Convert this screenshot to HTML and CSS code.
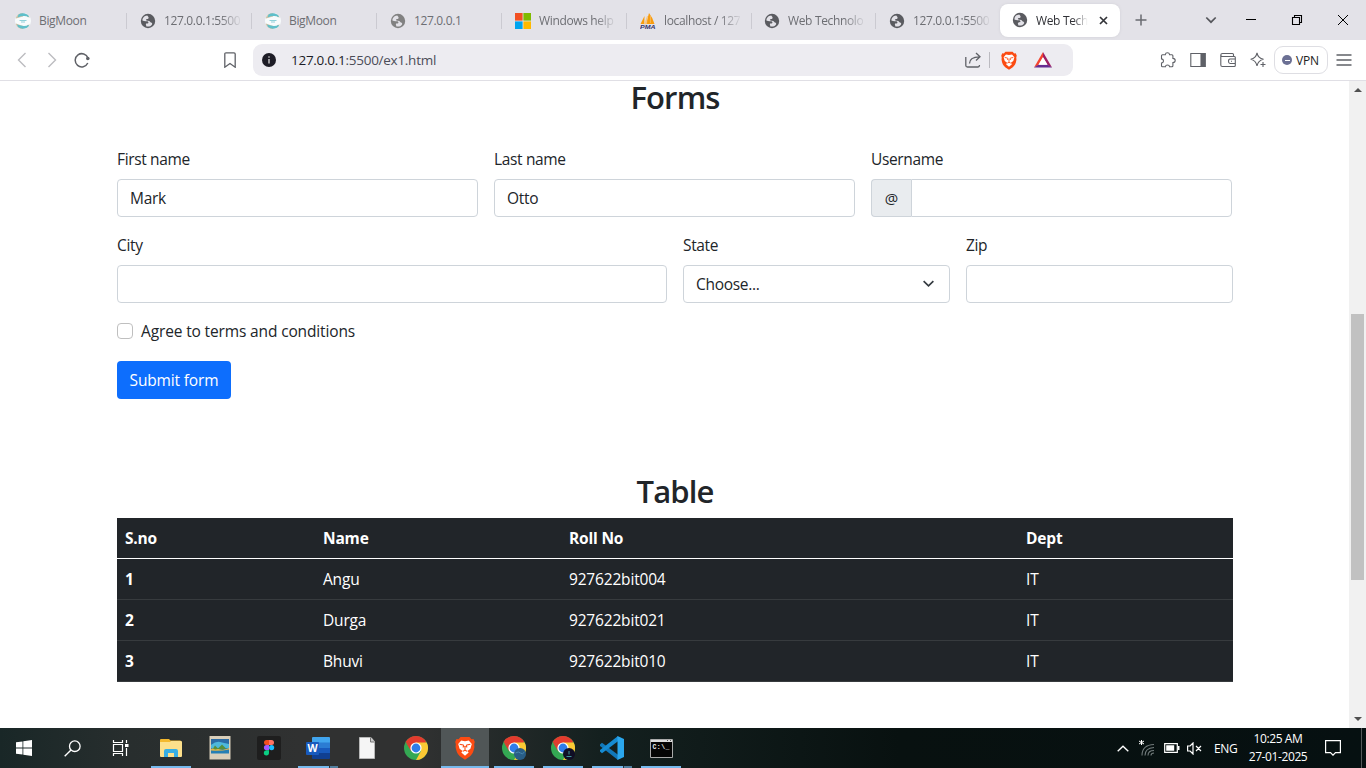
FILE: index.html
```html
<!DOCTYPE html>
<html lang="en">
<head>
<meta charset="utf-8">
<title>Web Technology</title>
<link rel="stylesheet" href="styles.css">
</head>
<body>
<svg class="defs" width="0" height="0">
  <defs>
    <symbol id="globe" viewBox="0 0 16 16"><circle cx="8" cy="8" r="7.2" fill="currentColor"/><path d="M7.200 2.400C4.200 2.600 2.300 5 2.400 7.600c1.200.5 2.600.9 4 .7.900-.2 1.800.1 2 .9.200.9-.4 1.200-1.700 1.200-.7 0-1 .5-.8 1.200l.5 1.900c2.300.4 4.500-.4 5.600-2.100.6-1-.1-1.600-1-2-.9-.4-.9-1.300-2-1.500-1.200-.2-2.300-.1-2.900-.6-.5-.6.1-1.200 1-1.300.9-.1 1.500-.4 1.500-1.300 0-.7-.4-1.400-1.400-2.300z" fill="#e3e2e8"/></symbol>
    <symbol id="moon" viewBox="0 0 16 16"><circle cx="8" cy="8" r="8" fill="#f8fbfc"/><path d="M.6 5A8 8 0 0 1 8 0v3.500L1 5.500zM.6 11A8 8 0 0 0 8 16v-3L1 10.500zM12 1.200l3 3.300-3-.5zM12 14.800l3-3.300-3 .5z" fill="#d3c5aa"/><path d="M3.500 1.500A8 8 0 0 1 14 3L13.500 4Q9 2 2.500 4.500zM3 14a8 8 0 0 0 11-1L13.500 12Q9 14 2 11.500z" fill="#5fbfca"/><path d="M4.500 7.500h7M6 9h4" stroke="#8fd0d9"/></symbol>
    <symbol id="lion" viewBox="0 0 20 24"><path d="M5.500 1h9l2 2.200 2-.3L19.800 6l-.6 2 .2 3c-.8 5-2.200 7.500-5 9.800L10 23.700l-4.400-2.900C2.800 18.500 1.400 16 .6 11l.2-3L.2 6l1.300-3.100 2 .3z" fill="#fb4b12"/><path d="M6.200 4.500 10 5.200l3.800-.7 3 3.500-1.400 4.700-3 2.200 1.300 1.700L10 19.800l-3.700-3.200 1.300-1.700-3-2.200L3.200 8z" fill="#fff"/><path d="m4.600 8.200 3.600.7.600 1.200-1 1.200M15.400 8.200l-3.600.7-.6 1.200 1 1.200M10 10v4.200m-2.200 1.100L10 14.300l2.200 1" stroke="#fb4b12" fill="none" stroke-width="1.100"/></symbol>
    <symbol id="chrome" viewBox="0 0 24 24"><circle cx="12" cy="12" r="12" fill="#34a853"/><path d="M12 12 1.600 6A12 12 0 0 1 22.400 6z" fill="#e33b2e"/><path d="M12 6.500h10.700A12 12 0 0 1 12 24l5-9z" fill="#fcc934"/><path d="M1.600 6 7 15l5-3z" fill="#e33b2e"/><circle cx="12" cy="12" r="5.600" fill="#fff"/><circle cx="12" cy="12" r="4.400" fill="#2f7de9"/></symbol>
  </defs>
</svg>

<header class="tabs">
  <div class="tab first"><svg class="fav"><use href="#moon"/></svg><span>BigMoon</span></div>
  <div class="tab"><svg class="fav"><use href="#globe"/></svg><span class="fade">127.0.0.1:5500</span></div>
  <div class="tab"><svg class="fav"><use href="#moon"/></svg><span>BigMoon</span></div>
  <div class="tab"><svg class="fav dim"><use href="#globe"/></svg><span>127.0.0.1</span></div>
  <div class="tab"><svg class="fav" viewBox="0 0 16 16"><path fill="#f25022" d="M0 0h7.600v7.600H0z"/><path fill="#7fba00" d="M8.400 0H16v7.600H8.400z"/><path fill="#00a4ef" d="M0 8.400h7.600V16H0z"/><path fill="#ffb900" d="M8.400 8.400H16V16H8.400z"/></svg><span class="fade">Windows help</span></div>
  <div class="tab"><svg class="fav" viewBox="0 0 16 16"><path d="M4.500 3 .5 11h3.800zM9 0 6 11h8.500Q13 5 9 0z" fill="#f89c0e"/><path d="M7.500 3 4.500 11h2zM10.500 3v7" fill="#f6c889" stroke="#f9c277" stroke-width=".6"/><text x="0" y="15.800" font-size="6.200" font-weight="700" font-style="italic" font-family="Liberation Sans, sans-serif" fill="#34336b" textLength="15.500" lengthAdjust="spacingAndGlyphs">PMA</text></svg><span class="fade">localhost / 127</span></div>
  <div class="tab"><svg class="fav"><use href="#globe"/></svg><span class="fade">Web Technolo</span></div>
  <div class="tab last"><svg class="fav"><use href="#globe"/></svg><span class="fade">127.0.0.1:5500</span></div>
  <div class="tab active"><svg class="fav"><use href="#globe"/></svg><span class="fade">Web Tech</span><svg class="close" viewBox="0 0 9 9"><path d="m1 1 7 7m0-7L1 8" stroke="#333539" stroke-width="1.700"/></svg></div>
  <svg class="plus" viewBox="0 0 12 12"><path d="M6 .5v11M.5 6h11" stroke="#6a6b70" stroke-width="1.500"/></svg>
  <div class="window-controls">
    <svg width="12" height="12" viewBox="0 0 12 12"><path d="m1.300 3.500 4.700 4.700 4.700-4.700" fill="none" stroke="#55565b" stroke-width="1.700"/></svg>
    <svg width="12" height="12" viewBox="0 0 12 12"><path d="M1 5.500h10" stroke="#000"/></svg>
    <svg width="12" height="12" viewBox="0 0 12 12"><path d="M1.500 3.500h7v7h-7zM3.500 3.500v-2h7v7h-2" fill="none" stroke="#000" stroke-width="1.100"/></svg>
    <svg width="12" height="12" viewBox="0 0 12 12"><path d="m1 1 10 10M11 1 1 11" stroke="#000"/></svg>
  </div>
</header>

<nav class="toolbar">
  <div class="history">
    <svg viewBox="0 0 16 16"><path d="M11.500 1 4.500 8l7 7" stroke="#bcbcc0" stroke-width="1.400"/></svg>
    <svg viewBox="0 0 16 16"><path d="m4.500 1 7 7-7 7" stroke="#bcbcc0" stroke-width="1.400"/></svg>
    <svg viewBox="0 0 16 16"><path d="M14 6A6.600 6.600 0 1 0 13.800 11" stroke="#5f6167" stroke-width="1.500"/><circle cx="13.800" cy="6.500" r="1.800" fill="#5f6167"/></svg>
  </div>
  <svg class="bookmark" viewBox="0 0 12 16"><path d="M2 .8h8Q11.200.8 11.200 2v13.200L6 11.500.8 15.200V2Q.8.8 2 .8z"/></svg>
  <div class="address">
    <svg class="info" viewBox="0 0 14 14"><circle cx="7" cy="7" r="7" fill="#1d1c26"/><path d="M7 6v4.500" stroke="#ddd" stroke-width="1.300"/><circle cx="7" cy="4" r=".8" fill="#ddd"/></svg>
    <span class="url"><b>127.0.0.1</b>:5500/ex1.html</span>
    <svg class="share" viewBox="0 0 16 16"><path d="M.8 5v8.500Q.8 15 2.500 15H13q1.500 0 1.500-2M4.500 11.500Q4.500 5 14.500 4.800M11 1l4 3.800-4 3.700"/></svg>
    <i class="divider"></i>
    <svg class="brave"><use href="#lion"/></svg>
    <svg class="bat" viewBox="0 0 18 16"><path d="M9 0 0 15.500l4.500-2.300L9 5.500z" fill="#f4442e"/><path d="m9 0 9 15.500-4.500-2.300L9 5.500z" fill="#9e1f63"/><path d="M0 15.500h18l-4.500-2.700h-9z" fill="#662d91"/><path d="m9 5-4.600 7.800h9.200z" fill="#fff"/></svg>
  </div>
  <div class="tools">
    <svg viewBox="0 0 16 16"><path d="M2.500 2.700h2.800Q5.500.8 7.400.8T9.600 2.700h2.300q1 0 1 1v2.700q2.300.1 2.300 2.100t-2.300 2.100v3.200q0 1-1 1H9.600Q9.400 13 7.500 13t-2.100 1.800H2.500q-1 0-1-1v-2.700q2-.2 2-2.100t-2-2.100V3.700q0-1 1-1z"/></svg>
    <svg viewBox="0 0 16 16"><path d="M.8 1.500h14.400v13H.8z"/><path d="M11 1.500h4v13h-4z" fill="#5f6167"/></svg>
    <svg viewBox="0 0 16 16"><path d="M13.500 4.500V2.500q0-1-1-1h-10Q.8 1.500.8 3T2.500 4.500h12q.8 0 .8 1v8q0 1-1 1H2.300q-1.500 0-1.500-1.500V3M15 7H10q-1.500 0-1.500 2.200T10 11.500h5M11 9.200h1"/></svg>
    <svg viewBox="0 0 16 16"><path d="M7 .8Q8 6 13.500 7.300 8 8.500 7 14 6 8.500.7 7.300 6 6 7 .8zM13 10v5m-2.500-2.500h5"/></svg>
  </div>
  <div class="vpn"><i></i>VPN</div>
  <svg class="menu" viewBox="0 0 16 12"><path d="M.5 1h15M.5 6h15M.5 11h15"/></svg>
</nav>

<div class="viewport">
  <main class="page">
    <h2>Forms</h2>
    <form class="form">
      <div class="row names">
        <label><span>First name</span><div class="control">Mark</div></label>
        <label><span>Last name</span><div class="control">Otto</div></label>
        <label><span>Username</span><div class="group"><div class="addon">@</div><div class="control"></div></div></label>
      </div>
      <div class="row places">
        <label><span>City</span><div class="control"></div></label>
        <label><span>State</span><div class="control select">Choose...<svg viewBox="0 0 16 16"><path d="m2 5 6 6 6-6"/></svg></div></label>
        <label><span>Zip</span><div class="control"></div></label>
      </div>
      <div class="check"><i></i><span>Agree to terms and conditions</span></div>
      <button class="submit" type="button">Submit form</button>
    </form>
    <h2 class="table-title">Table</h2>
    <table>
      <colgroup><col class="c1"><col class="c2"><col class="c3"><col></colgroup>
      <thead><tr><th>S.no</th><th>Name</th><th>Roll No</th><th>Dept</th></tr></thead>
      <tbody>
        <tr><th>1</th><td>Angu</td><td>927622bit004</td><td>IT</td></tr>
        <tr><th>2</th><td>Durga</td><td>927622bit021</td><td>IT</td></tr>
        <tr><th>3</th><td>Bhuvi</td><td>927622bit010</td><td>IT</td></tr>
      </tbody>
    </table>
  </main>
  <div class="scrollbar">
    <svg viewBox="0 0 8 4"><path d="M0 4h8L4 0z"/></svg>
    <div class="thumb"></div>
    <svg viewBox="0 0 8 4"><path d="M0 0h8L4 4z"/></svg>
  </div>
</div>

<footer class="taskbar">
  <div class="system">
    <div class="slot"><svg width="16" height="16" viewBox="0 0 16 16"><path d="M0 2.300 6.500 1.400v6.200H0zM7.300 1.200 16 0v7.600H7.300zM0 8.400h6.500v6.200L0 13.700zM7.300 8.400H16V16l-8.700-1.200z" fill="#fff"/></svg></div>
    <div class="slot"><svg width="17" height="17" viewBox="0 0 17 17"><circle cx="10.800" cy="6.200" r="5.300" fill="none" stroke="#fff" stroke-width="1.300"/><path d="m7 10-6.300 6.300" stroke="#fff" stroke-width="1.400"/></svg></div>
    <div class="slot"><svg width="17" height="16" viewBox="0 0 17 16"><path d="M1.500 0v2.500h9V0M1.500 16v-2.500h9V16M1.500 4.500h9v7h-9zM14.500 0v3M14.500 8v8" fill="none" stroke="#fff" stroke-width="1.200"/><path d="M13 4h3.500v3H13z" fill="#fff"/></svg></div>
  </div>
  <div class="apps">
    <div class="slot run"><svg width="22" height="18" viewBox="0 0 22 18"><path d="M0 1q0-1 1-1h8l1.500 1.500H20q1 0 1 1V17H0z" fill="#f4b92e"/><path d="M0 3h10l1-1h10q1 0 1 1v14q0 1-1 1H1q-1 0-1-1z" fill="#fde08b"/><path d="M4 18v-6q0-2 2-2h10q2 0 2 2v6h-4v-4H8v4z" fill="#37aee3"/></svg></div>
    <div class="slot"><svg width="22" height="24" viewBox="0 0 22 24"><path d="M.5 0h21v23.500H.5z" fill="#d9cfba"/><path d="M2 3h18v14.500H2z" fill="#257fb4"/><path d="M2 3h18v5H2z" fill="#2b6ca6"/><path d="M2 9q5-4 9-3t9 2v4H2z" fill="#4db8dc"/><path d="M2 13q4-2 8 0t10-1v1.500q-9 2-18 1z" fill="#e0b648"/><path d="m4 12.500 2-3 3 3 4-4 4 4-3 1-5-.5-3 .5z" fill="#568f3d"/></svg></div>
    <div class="slot"><svg width="24" height="24" viewBox="0 0 24 24"><rect width="24" height="24" rx="2" fill="#1e1e1e"/><path d="M12 4H9.500a2.500 2.500 0 0 0 0 5H12z" fill="#f24e1e"/><path d="M12 4h2.500a2.500 2.500 0 0 1 0 5H12z" fill="#ff7262"/><path d="M12 9H9.500a2.600 2.600 0 0 0 0 5.200H12z" fill="#a259ff"/><circle cx="14.600" cy="11.600" r="2.600" fill="#1abcfe"/><path d="M12 14.200H9.500a2.600 2.600 0 1 0 2.500 2.600z" fill="#0acf83"/></svg></div>
    <div class="slot run multi"><svg width="24" height="22" viewBox="0 0 24 22"><path d="M6 1q0-1 1-1h16q1 0 1 1v5H6z" fill="#41a5ee"/><path d="M6 5.500h18V11H6z" fill="#2b7cd3"/><path d="M6 11h18v5.500H6z" fill="#185abd"/><path d="M6 16h18v5q0 1-1 1H7q-1 0-1-1z" fill="#103f91"/><rect y="5" width="13" height="13" rx="1" fill="#185abd"/><text x="6.500" y="15" text-anchor="middle" font-family="Open Sans, sans-serif" font-size="10.500" font-weight="700" fill="#fff">W</text></svg></div>
    <div class="slot"><svg width="16" height="22" viewBox="0 0 16 22"><path d="M.5.500h11.500l3.500 4v17H.5z" fill="#f5f5f5" stroke="#b8b8b8"/><path d="M11.500.5v4.500h4" fill="#ccc" stroke="#777"/></svg></div>
    <div class="slot"><svg width="24" height="24"><use href="#chrome"/></svg></div>
    <div class="slot current"><svg width="20" height="24"><use href="#lion"/></svg></div>
    <div class="slot run"><svg width="24" height="24"><use href="#chrome"/><circle cx="18" cy="18" r="6" fill="#285d86"/><path d="M13.500 17q3-2 5 0t4-1" stroke="#4787b0" fill="none"/></svg></div>
    <div class="slot run"><svg width="24" height="24"><use href="#chrome"/><circle cx="18" cy="18" r="6" fill="#100e25"/><path d="M18 15v3.500m-2.500 2h5" stroke="#3f9597" fill="none"/></svg></div>
    <div class="slot run multi"><svg width="24" height="24" viewBox="0 0 24 24"><path d="m0 8.500 2-1.800 16 12V24L0 10z" fill="#1278ba"/><path d="m0 15.500 2 1.800 16-12V0L0 14z" fill="#168bd2"/><path d="m17.500 0 6.500 3v18l-6.500 3z" fill="#2ba7ed"/></svg></div>
    <div class="slot run"><svg width="23" height="19" viewBox="0 0 23 19"><path d="M.5.500h22v18H.5z" fill="#050505" stroke="#aaa"/><path d="M1 1h21v2H1z" fill="#ddd"/><path d="M17 1h1v1h-1zm3 0h1v1h-1z" fill="#555"/><text x="2.500" y="9.500" font-family="Liberation Mono, monospace" font-size="6.500" font-weight="700" fill="#eee" textLength="17">C:\_</text></svg></div>
  </div>
  <div class="tray">
    <svg class="up" viewBox="0 0 12 7"><path d="m.7 6.300 5.300-5 5.300 5" fill="none" stroke="#fff" stroke-width="1.400"/></svg>
    <svg class="wifi" viewBox="0 0 16 16"><path d="M3 15.500Q3 5 15 4.500M6 15.500Q6 8 15 7.500M9 15.500q0-5 6-5M12 15.500q0-2.500 3-2.500" fill="none" stroke="#727b7c" stroke-width="1.100"/><path d="M2.500 0v5M0 1l5 3M5 1 0 4" stroke="#fff"/></svg>
    <svg class="battery" viewBox="0 0 16 10"><path d="M.7.700h12.600v8.600H.7z" fill="none" stroke="#fff" stroke-width="1.200"/><path d="M2.200 2.300h8v5.400h-8zM14 3h1.500v4H14z" fill="#fff"/></svg>
    <svg class="sound" viewBox="0 0 15 13"><path d="M.6 4h2.500L6 1v11L3.100 9H.6zM9 4l5 5m0-5L9 9" fill="none" stroke="#fff" stroke-width="1.200"/></svg>
    <span class="lang">ENG</span>
    <div class="clock"><span>10:25 AM</span><span class="date">27-01-2025</span></div>
    <svg class="note" viewBox="0 0 16 16"><path d="M.6.600h14.800v12H10.500L8 15.200l-2.500-2.600H.6z" fill="none" stroke="#fff" stroke-width="1.200"/></svg>
    <i class="peek"></i>
  </div>
</footer>
</body>
</html>
```
FILE: styles.css
```css
* { box-sizing: border-box; }
body { margin: 0; width: 1366px; height: 768px; overflow: hidden; display: flex; flex-direction: column; background: #fff; color: #212529; font-family: "Open Sans", "Noto Sans", sans-serif; font-size: 15.5px; }
svg { display: block; flex: none; }
.defs { display: none; }

.tabs { height: 40px; flex: none; display: flex; align-items: center; background: #e3e2e8; font-size: 12px; color: #6d6e73; }
.tab { width: 125px; height: 16px; padding-left: 13px; display: flex; align-items: center; gap: 8px; border-right: 1px solid #cbcad1; white-space: nowrap; flex: none; margin-top: 1px; }
.tab span { letter-spacing: -.35px; width: 80px; }
.fade { -webkit-mask-image: linear-gradient(90deg, #000 70%, transparent 98%); mask-image: linear-gradient(90deg, #000 70%, transparent 98%); }
.tab.first { width: 127px; padding-left: 15px; }
.tab:nth-child(7) { width: 124px; padding-left: 12px; }
.tab.last { border: 0; width: 124px; }
.fav { width: 16px; height: 16px; color: #5a5b60; }
.dim { color: #818181; }
.tab.active { width: 120px; height: 33px; margin: 0; border: 0; border-radius: 8px; background: #fff; color: #303136; padding-left: 12px; box-shadow: 0 0 3px #d0cfd6; }
.tab.active span { width: 53px; }
.close { width: 9px; height: 9px; margin-left: 2px; }
.plus { width: 12px; height: 12px; margin-left: 15px; }
.window-controls { display: flex; margin-left: auto; gap: 34px; padding-right: 17px; }
.window-controls svg:first-child { margin-right: -6px; }

.toolbar { height: 41px; flex: none; display: flex; align-items: center; border-bottom: 1px solid #e0dfe5; background: #fff; }
.toolbar svg { fill: none; stroke-width: 1.3px; }
.history { display: flex; gap: 14px; padding-left: 14px; }
.history svg { width: 16px; height: 16px; }
.bookmark { width: 12px; height: 16px; margin-left: 134px; stroke: #5f6167; }
.address { width: 820px; height: 32px; margin-left: 17px; border-radius: 9px; background: #edecf1; display: flex; align-items: center; padding-left: 9px; }
.info { width: 14px; height: 14px; }
.url { margin-left: 15px; font-size: 13.5px; letter-spacing: -.27px; color: #4c4d58; }
.url b { font-weight: 400; color: #1c1c27; }
.share { width: 16px; height: 16px; margin-left: auto; stroke: #5f6167; }
.divider { width: 1px; height: 16px; margin: 0 10px 0 8px; background: #bbbac0; }
.brave { width: 18px; height: 19px; }
.bat { width: 18px; height: 16px; margin: 0 21px 0 16px; }
.tools { display: flex; gap: 14px; margin-left: 87px; }
.tools svg { width: 16px; height: 16px; stroke: #5f6167; stroke-width: 1.1px; }
.vpn { width: 54px; height: 28px; margin-left: 8px; border: 1px solid #dedee3; border-radius: 9px; display: flex; align-items: center; gap: 4px; padding-left: 7px; font-size: 12px; color: #222; letter-spacing: -.2px; }
.vpn i { width: 10px; height: 10px; border-radius: 50%; background: #6b7094; display: flex; align-items: center; justify-content: center; }
.vpn i::before { content: ""; width: 5px; height: 1px; background: #fff; }
.menu { width: 16px; height: 12px; margin-left: 8px; stroke: #5f6167; }

.viewport { height: 647px; flex: none; display: flex; overflow: hidden; }
.page { width: 1349px; padding: 0 116px 0 117px; }
h2 { margin: 0; height: 38px; line-height: 33px; font-size: 31px; font-weight: 600; text-align: center; letter-spacing: -.85px; }
.form { margin-top: 28px; }
.row { display: grid; gap: 16px; margin-bottom: 16px; }
.names { grid-template-columns: 361px 361px 361px; }
.places { grid-template-columns: 550px 267px 267px; }
.row label { display: block; }
.row label > span { display: block; height: 32px; line-height: 25px; letter-spacing: -.35px; }
.control { height: 38px; border: 1px solid #ced4da; border-radius: 4px; padding: 0 12px; line-height: 37px; letter-spacing: -.3px; background: #fff; }
.group { display: flex; }
.addon { width: 40px; height: 38px; border: 1px solid #ced4da; border-right: 0; border-radius: 4px 0 0 4px; background: #e9ecef; text-align: center; line-height: 36px; font-size: 15px; }
.group .control { flex: 1; border-radius: 0 4px 4px 0; }
.select { display: flex; align-items: center; justify-content: space-between; }
.select svg { width: 13px; height: 13px; margin-right: 2px; margin-bottom: 2px; fill: none; stroke: #343a40; stroke-width: 2px; }
.check { height: 26px; display: flex; align-items: flex-start; gap: 8px; line-height: 25px; letter-spacing: -.14px; }
.check i { width: 16px; height: 16px; margin-top: 4px; border: 1px solid #bfbfbf; border-radius: 4px; }
.submit { display: block; width: 114px; height: 38px; margin-top: 16px; padding: 0; border: 0; border-radius: 4px; background: #0d6efd; color: #fff; font: inherit; letter-spacing: -.15px; }
.table-title { margin-top: 75px; line-height: 35px; }
table { width: 1116px; margin-top: 6px; border-collapse: separate; border-spacing: 0; table-layout: fixed; background: #212529; color: #fff; letter-spacing: -.18px; }
.c1 { width: 198px; }
.c2 { width: 246px; }
.c3 { width: 457px; }
th, td { height: 41px; padding: 0 8px; border-bottom: 1px solid #373b3e; text-align: left; line-height: 24px; }
thead th { border-bottom-color: #fff; }

.scrollbar { width: 17px; background: #f1f1f1; display: flex; flex-direction: column; align-items: center; padding: 7px 0 7px; }
.scrollbar svg { width: 8px; height: 4px; fill: #505050; }
.thumb { width: 13px; height: 266px; margin: 222px 0 auto; background: #c1c1c1; }

.taskbar { height: 40px; flex: none; display: flex; background: linear-gradient(90deg, #192727 0, #282e2e 130px, #303131 300px, #303131 420px, #14201f 600px, #081110 900px, #061011 100%); color: #fff; }
.system, .apps { display: flex; }
.system { margin-right: 3px; }
.apps { gap: 1px; }
.slot { width: 48px; height: 40px; display: flex; align-items: center; justify-content: center; }
.run { background: linear-gradient(#76b9ed, #76b9ed) center bottom / 40px 2px no-repeat; }
.multi { background: linear-gradient(90deg, #76b9ed 31px, #28333a 31px, #28333a 32px, #527f9f 32px) center bottom / 40px 2px no-repeat; }
.current { background: linear-gradient(#76b9ed, #76b9ed) left bottom / 48px 2px no-repeat, #505657; }
.tray { display: flex; align-items: center; margin-left: auto; font-size: 12px; letter-spacing: -.4px; }
.up { width: 12px; height: 7px; }
.wifi { width: 16px; height: 16px; margin: 0 9px 0 10px; }
.battery { width: 16px; height: 10px; }
.sound { width: 15px; height: 13px; margin-left: 7px; }
.lang { width: 24px; margin-left: 12px; }
.clock { width: 60px; margin-left: 10px; display: flex; flex-direction: column; text-align: center; line-height: 18px; white-space: nowrap; align-items: center; }
.note { width: 16px; height: 16px; margin-left: 17px; }
.peek { width: 1px; height: 40px; margin: 0 4px 0 20px; background: #54595a; }
```
